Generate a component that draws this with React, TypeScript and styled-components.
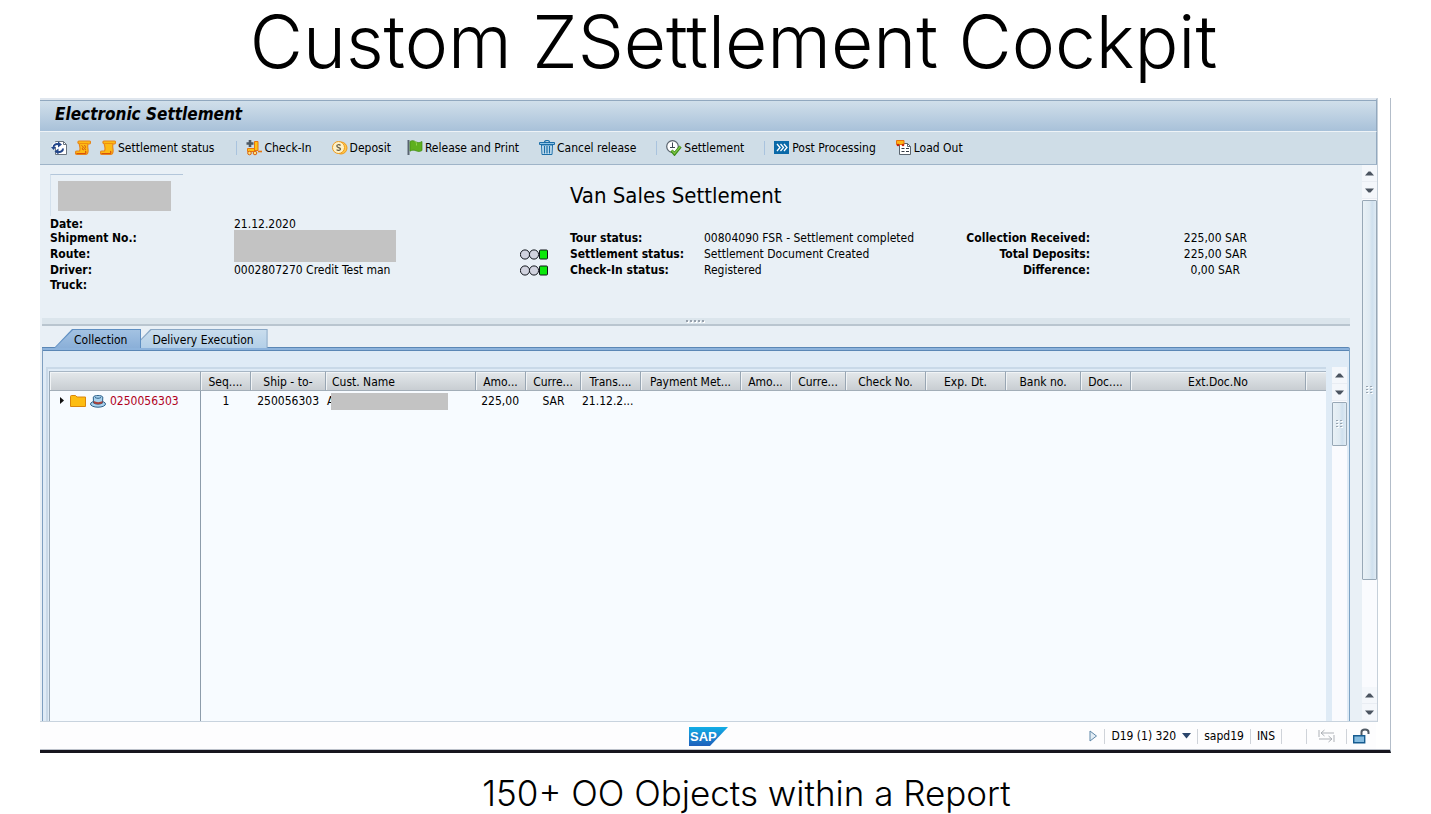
import React from "react";
import styled, { createGlobalStyle } from "styled-components";

const Global = createGlobalStyle`
  *, *::before, *::after { box-sizing: border-box; }
  body { margin: 0; background: #fff; color: #000; font: 12px/16px "DejaVu Sans Condensed", "DejaVu Sans", sans-serif; }
  button { font: inherit; color: inherit; border: 0; padding: 0; background: none; cursor: pointer; }
  h1, h2, p, dl, dd, dt { margin: 0; }
  svg { display: block; flex: none; }
`;

const Slide = styled.div`
  display: flex;
  flex-direction: column;
  min-height: 100vh;
  padding: 0 40px;
`;

const SlideTitle = styled.h1`
  padding: 0 0 14px 36px;
  font: 300 73px/84px Inter, sans-serif;
  text-align: center;
`;

const SlideCaption = styled.p`
  padding: 19px 0 0 62px;
  height: 61px;
  font: 300 35px/42px Inter, sans-serif;
  text-align: center;
`;

const Window = styled.section`
  flex: 1;
  display: flex;
  flex-direction: column;
  border-right: 1px solid #b3bdc9;
  border-bottom: 3px solid #17161e;
`;

const Frame = styled.div`
  flex: 1;
  display: flex;
  flex-direction: column;
  margin-right: 12px;
  border-right: 1px solid #c6d0da;
`;

const TitleBar = styled.header`
  height: 34px;
  padding-left: 15px;
  border-top: 2px solid #dfe6ee;
  border-bottom: 1px solid #eef3f7;
  border-right: 1px solid #93a9bf;
  box-shadow: inset 0 1px #91a8bf;
  background: linear-gradient(#d2e0eb, #a8c1d9);
  font: italic bold 17px/29px "DejaVu Sans Condensed", "DejaVu Sans", sans-serif;
`;

const Toolbar = styled.div`
  display: flex;
  align-items: center;
  height: 33px;
  padding-left: 11px;
  border-bottom: 1px solid #9fb4c8;
  border-right: 1px solid #93a9bf;
  background: #cfdde7;
`;

const ToolButton = styled.button<{ $gap?: number }>`
  display: flex;
  align-items: center;
  gap: 2px;
  height: 24px;
  margin-right: ${(p) => p.$gap ?? 20}px;
  white-space: nowrap;
`;

const ToolDivider = styled.span`
  width: 1px;
  height: 14px;
  margin-right: 9px;
  background: #a9c3de;
`;

const Body = styled.div`
  flex: 1;
  display: flex;
  min-height: 480px;
  border-bottom: 1px solid #c8d3de;
  background: #e9f0f6;
`;

const Main = styled.main`
  flex: 1;
  min-width: 0;
  display: flex;
  flex-direction: column;
  padding: 0 12px 0 2px;
`;

const Summary = styled.div`
  display: flex;
  height: 153px;
  padding: 9px 0 0 8px;
`;

const SummaryGroup = styled.div<{ $width: number }>`
  flex: none;
  width: ${(p) => p.$width}px;
`;

const LogoFrame = styled.div`
  width: 133px;
  height: 42px;
  padding: 6px 0 0 7px;
  border-top: 1px solid #b3c6da;
  border-left: 1px solid #d3e0ec;
`;

const Redacted = styled.span<{ $width: number; $height: number }>`
  position: relative;
  display: block;
  width: ${(p) => p.$width}px;
  height: ${(p) => p.$height}px;
  background: #c3c3c3;
`;

const Heading = styled.h2`
  height: 42px;
  padding: 8px 0 0 50px;
  font-size: 22px;
  font-weight: 400;
  line-height: 28px;
`;

const Blank = styled.div`
  height: 42px;
`;

const Facts = styled.dl<{ $columns: string; $right?: boolean }>`
  display: grid;
  grid-template-columns: ${(p) => p.$columns};
  grid-template-rows: 14px 16px 16px 15px 16px;
  line-height: 16px;
  white-space: nowrap;
  text-align: ${(p) => (p.$right ? "right" : "left")};
  dt { font-weight: 700; }
`;

const Term = styled.dt<{ $row: number; $column?: number }>`
  grid-row: ${(p) => p.$row};
  grid-column: ${(p) => p.$column ?? 1};
`;

const Value = styled.dd<{ $row: number; $column?: number; $span?: number; $inset?: number }>`
  grid-row: ${(p) => p.$row} / span ${(p) => p.$span ?? 1};
  grid-column: ${(p) => p.$column ?? 2};
  padding-right: ${(p) => p.$inset ?? 0}px;
`;

const Lamp = styled.dd<{ $row: number }>`
  grid-row: ${(p) => p.$row};
  grid-column: 1;
  padding-top: 3px;
`;

const Splitter = styled.div`
  display: flex;
  justify-content: center;
  align-items: center;
  gap: 2px;
  height: 8px;
  padding-right: 2px;
  border-bottom: 2px solid #b9c5cf;
  background: #dbe5ec;
`;

const SplitDot = styled.i`
  width: 2px;
  height: 2px;
  background: #97a1ac;
  box-shadow: 1px 1px #fff;
`;

const Tabs = styled.div`
  display: flex;
  padding: 3px 0 0 12px;
`;

const Tab = styled.button<{ $active?: boolean }>`
  position: relative;
  z-index: ${(p) => (p.$active ? 2 : 1)};
  height: 19px;
  margin-right: -9px;
  padding: 3px 14px 0 20px;
  line-height: 16px;
  isolation: isolate;
  &::before, &::after {
    content: "";
    position: absolute;
    inset: 0;
    z-index: -1;
    clip-path: polygon(18px 0, 100% 0, 100% 100%, 0 100%);
    background: ${(p) => (p.$active ? "#5f8fc2" : "#8aa8c6")};
  }
  &::after {
    inset: 1px 1px 0 1px;
    background: ${(p) => (p.$active ? "linear-gradient(#a3c2e2, #8aafd8)" : "linear-gradient(#c9dded, #b3cfe8)")};
  }
`;

const Panel = styled.div`
  flex: 1;
  display: flex;
  padding: 17px 2px 0 3px;
  border-top: 2px solid #8db3dc;
  border-left: 1px solid #7f9fc0;
  border-right: 1px solid #7da3c4;
  border-radius: 0 2px 0 0;
  box-shadow: inset 0 1px #5b87b5, 0 -1px #5b87b5;
  background: #dfebf6;
`;

const GridFrame = styled.div`
  flex: 1;
  min-width: 0;
  display: flex;
  margin-right: 6px;
  padding: 2px 0 0 1px;
  border-top: 2px solid #c9d9e8;
  border-left: 2px solid #c9d9e8;
`;

const GridArea = styled.div`
  flex: 1;
  min-width: 0;
  overflow: hidden;
  border-left: 1px solid #9aaab8;
  background: linear-gradient(#8d9cab, #8d9cab) 150px 0 / 1px 100% no-repeat #f7fbff;
`;

const Grid = styled.table`
  width: 100%;
  border-collapse: separate;
  border-spacing: 0;
  table-layout: fixed;
  white-space: nowrap;
`;

const HeadCell = styled.th<{ $left?: boolean }>`
  height: 20px;
  padding: 2px 6px 0;
  overflow: hidden;
  border-top: 1px solid #a7b6c4;
  border-bottom: 1px solid #a3aeb8;
  border-right: 1px solid #98a6b3;
  background: linear-gradient(#e4e8eb, #c8cdd2);
  box-shadow: inset 1px 1px #f1f4f6;
  font-weight: 400;
  line-height: 16px;
  text-align: ${(p) => (p.$left ? "left" : "center")};
  &:last-child { border-right: 0; }
`;

const Cell = styled.td<{ $align?: string }>`
  height: 19px;
  padding: 1px ${(p) => (p.$align === "right" ? 7 : 1)}px 0 1px;
  text-align: ${(p) => p.$align ?? "left"};
`;

const TreeNode = styled.div`
  display: flex;
  align-items: center;
  gap: 4px;
  padding-left: 6px;
  color: #b0001c;
`;

const NameMask = styled.div`
  display: flex;
  & > span:first-child { width: 4px; }
`;

const Scrollbar = styled.div`
  flex: none;
  display: flex;
  flex-direction: column;
  width: 15px;
  background: #fafbfe;
`;

const ScrollArrow = styled.button`
  display: grid;
  place-items: center;
  flex: none;
  width: 15px;
  height: 17px;
  border-bottom: 1px solid #e9edf3;
  background: #f4f7fb;
`;

const ScrollTrack = styled.div`
  flex: 1;
  padding-top: 1px;
`;

const ScrollThumb = styled.div<{ $size: string }>`
  display: grid;
  place-items: center;
  height: ${(p) => p.$size};
  border: 1px solid #98a8b6;
  border-radius: 1px;
  background: linear-gradient(90deg, #e9f1f6, #dfeaf2 50%, #cfe0ee 70%, #dfebf4);
`;

const StatusBar = styled.footer`
  display: grid;
  grid-template-columns: 1fr auto 1fr;
  align-items: center;
  height: 27px;
  margin-right: 14px;
  padding-top: 1px;
  background: #fdfdfe;
`;

const StatusItems = styled.div`
  display: flex;
  align-items: center;
  justify-content: flex-end;
  gap: 6px;
  padding-right: 6px;
`;

const StatusDivider = styled.span`
  width: 1px;
  height: 15px;
  background: #cfd3d9;
`;

const StatusGap = styled.span`
  width: 12px;
`;

const StatusMode = styled.span`
  padding: 0 5px;
`;

const StatusButton = styled.button`
  display: flex;
  align-items: center;
  gap: 6px;
`;

const BottomLine = styled.div`
  height: 1px;
  background: #bcc1ca;
`;

const RefreshIcon = () => (
  <svg width="16" height="16" viewBox="0 0 16 16" fill="none">
    <path d="M4.500 1.500h8l3 3v10h-11z" fill="#fff" stroke="#6a747f" />
    <path d="M12.500 1.500v3h3" stroke="#6a747f" />
    <path d="M2.500 7.500c0-2.800 2.500-4 5-3.200" stroke="#fff" strokeWidth="4" />
    <path d="M2.500 7.500c0-2.800 2.500-4 5-3.200" stroke="#23468a" strokeWidth="2" />
    <path d="M7 1.500l4 3-4 3z" fill="#23468a" />
    <path d="M12 8.500c0 2.800-2.500 4-5 3.200" stroke="#23468a" strokeWidth="2" />
    <path d="M7.500 8.500l-4 3 4 3z" fill="#23468a" />
    <path d="M0 7h5l-2.500 3z" fill="#23468a" />
  </svg>
);

const ScrollIcon = ({ marked }: { marked?: boolean }) => (
  <svg width="16" height="16" viewBox="0 0 16 16" strokeLinejoin="round">
    <path d="M4 1h10.500c1.500 0 1.500 3-.5 3H13c-1 3 .5 5 0 8-.3 2-1 2.500-2.500 2.500H2c-2 0-2-3.500 0-3.500h2.500C6 8 4 6 4.500 4 2.500 4 2.500 1 4 1z" fill="#fdbb14" stroke="#e8861a" strokeWidth="1.200" />
    <path d="M1.500 13.500h8.500c1 0 1-1.500.5-2.500" fill="none" stroke="#d8500c" strokeWidth="1.200" />
    <path d="M4.500 3.500H13" stroke="#ef8f10" />
    {marked && <path d="M6.500 5.500l2 1.500-1.500 2 2 1M9.500 5l1 2-1 2 1.500 1" fill="none" stroke="#d8600c" />}
  </svg>
);

const CheckInIcon = () => (
  <svg width="16" height="16" viewBox="0 0 16 16" fill="none">
    <path d="M8.500 1.500h3.500v9H8.500z" fill="#fdc216" stroke="#e8760c" />
    <path d="M12 11.500h4" stroke="#e8760c" strokeWidth="1.600" />
    <path d="M1.500 8.500h7v3h-7z" fill="#fdc216" stroke="#e8760c" />
    <circle cx="3.500" cy="13" r="1.800" fill="#ffe27a" stroke="#d8600c" />
    <circle cx="9" cy="13" r="1.800" fill="#ffe27a" stroke="#d8600c" />
    <path d="M4 0v7M.5 3.500h7" stroke="#4d5863" strokeWidth="2.600" />
  </svg>
);

const CoinIcon = () => (
  <svg width="16" height="16" viewBox="0 0 16 16" fill="none">
    <circle cx="9" cy="8" r="6" fill="#fdc74a" stroke="#ee9a1c" />
    <circle cx="6.500" cy="7.500" r="6" fill="#fff1c4" stroke="#ee9a1c" />
    <path d="M8.500 5.500c-1-1.200-3.700-1-3.700.6 0 1.900 3.700 1 3.700 3 0 1.600-2.800 1.800-3.900.5" stroke="#5f5a48" strokeWidth="1.200" />
  </svg>
);

const FlagIcon = () => (
  <svg width="16" height="16" viewBox="0 0 16 16">
    <path d="M.5 0h2v15h-2z" fill="#596470" />
    <path d="M3 1.500c3-2 5 0 7 .8 1.800.7 3.500 0 5-.8v9c-2 1.200-4 1.200-6 .3-2-.8-4-1-6 .4z" fill="#5fb01e" stroke="#3f8a12" strokeWidth=".7" />
    <path d="M8 1.500c1.500.5 1.500 1 1.500 4" fill="none" stroke="#93d44e" />
  </svg>
);

const TrashIcon = () => (
  <svg width="16" height="16" viewBox="0 0 16 16" fill="none" stroke="#1b6ea8">
    <path d="M5.500 2c0-2 5-2 5 0" strokeWidth="1.200" />
    <path d="M.5 2.500h15v2H.5z" fill="#8fc3e6" />
    <path d="M2.500 5l.5 9.500h10l.5-9.500z" fill="#cfe6f4" />
    <path d="M5.500 6v7.500M8 6v7.500M10.500 6v7.500" strokeWidth="1.300" />
  </svg>
);

const ClockCheckIcon = () => (
  <svg width="16" height="16" viewBox="0 0 16 16" fill="none">
    <circle cx="6.500" cy="6.500" r="5.800" fill="#fff" stroke="#5a646e" strokeWidth="1.200" />
    <path d="M6.500 2.500v5.500M4 7.500h5" stroke="#3f4851" />
    <path d="M5.500 10.500l3 3.500 6-7.500" stroke="#3c8c18" strokeWidth="3" />
    <path d="M5.800 10.500l2.700 3 5.800-7" stroke="#7cc443" strokeWidth="1.200" />
  </svg>
);

const ChevronsIcon = () => (
  <svg width="16" height="16" viewBox="0 0 16 16" fill="none">
    <path d="M0 1h15v13H0z" fill="#0a69a8" />
    <path d="M3 4l3 3.500L3 11M6.500 4l3 3.500-3 3.500M10 4l3 3.500-3 3.500" stroke="#fff" strokeWidth="1.300" />
  </svg>
);

const LoadOutIcon = () => (
  <svg width="16" height="16" viewBox="0 0 16 16" fill="none">
    <path d="M3.500 3.500h8l3 3V14.500h-11z" fill="#fff" stroke="#5a646e" />
    <path d="M11.500 3.500v3h3" stroke="#5a646e" />
    <path d="M5.500 8.500h3M10 8.500h3M5.500 11.500h3M10 11.500h3" stroke="#333b44" />
    <path d="M.5.5h7.500v4H.5z" fill="#fdb515" stroke="#e8700c" />
    <circle cx="2" cy="5" r="1.300" fill="#c9280c" />
    <circle cx="7" cy="5" r="1.300" fill="#c9280c" />
  </svg>
);

const LampIcon = () => (
  <svg width="28" height="11" viewBox="0 0 28 11" stroke="#10141a">
    <circle cx="5" cy="5.500" r="4.600" fill="#d0d2de" />
    <circle cx="14" cy="5.500" r="4.600" fill="#d0d2de" />
    <rect x="19.500" y="1" width="8" height="9" rx="1" fill="#0be80b" />
  </svg>
);

const ExpandIcon = () => (
  <svg width="9" height="8" viewBox="0 0 9 8">
    <path d="M3 0l4 3.500L3 7z" fill="#111" />
  </svg>
);

const FolderIcon = () => (
  <svg width="16" height="12" viewBox="0 0 16 12">
    <path d="M.5 1.500q0-1 1-1h4l1.500 1.500h8.500v9.500H.5z" fill="#fdbd12" stroke="#d9860c" />
  </svg>
);

const HatIcon = () => (
  <svg width="16" height="13" viewBox="0 0 16 13">
    <ellipse cx="8" cy="9" rx="7.500" ry="3.200" fill="#a9d2ee" stroke="#2c5f88" />
    <path d="M3.500 8l-.2-6c1-2 8.500-2 9.500 0l-.3 6c-2 1.500-7 1.500-9 0z" fill="#a9d2ee" stroke="#2c5f88" />
    <path d="M3.700 6c2.500 1.500 6.500 1.500 8.800 0v2.200c-2.500 1.400-6.500 1.400-8.800 0z" fill="#a5423c" />
    <path d="M5 2.500c2 1 4 1 6 0" fill="none" stroke="#2c5f88" />
  </svg>
);

const ArrowGlyph = ({ down }: { down?: boolean }) => (
  <svg width="9" height="5" viewBox="0 0 9 5">
    <path d={down ? "M0 .5h9L5.500 4.500h-2z" : "M0 4.500h9L5.500.5h-2z"} fill="#4b5460" />
  </svg>
);

const GripIcon = () => (
  <svg width="7" height="8" viewBox="0 0 7 8">
    <path d="M1 1h2v1H1zM5 1h2v1H5zM1 4h2v1H1zM5 4h2v1H5zM1 7h2v1H1zM5 7h2v1H5z" fill="#fff" />
    <path d="M0 0h2v1H0zM4 0h2v1H4zM0 3h2v1H0zM4 3h2v1H4zM0 6h2v1H0zM4 6h2v1H4z" fill="#98a4b0" />
  </svg>
);

const SapLogo = () => (
  <svg width="39" height="19" viewBox="0 0 39 19" role="img" aria-label="SAP">
    <defs>
      <linearGradient id="sap" x1="0" y1="0" x2="0" y2="1">
        <stop offset="0" stopColor="#12aee6" />
        <stop offset="1" stopColor="#1e5fbb" />
      </linearGradient>
    </defs>
    <path d="M0 0h39L21 19H0z" fill="url(#sap)" />
    <text x="1" y="14" fill="#fff" fontFamily="Liberation Sans, sans-serif" fontSize="13" fontWeight="700">SAP</text>
  </svg>
);

const PlayIcon = () => (
  <svg width="9" height="12" viewBox="0 0 9 12">
    <path d="M1 1v10l6.500-5z" fill="#e3edf5" stroke="#5f87a8" />
  </svg>
);

const CaretIcon = () => (
  <svg width="9" height="6" viewBox="0 0 9 6">
    <path d="M0 0h9L4.500 5.500z" fill="#2a456b" />
  </svg>
);

const InsertIcon = () => (
  <svg width="17" height="14" viewBox="0 0 17 14" fill="none" stroke="#adb1b7">
    <path d="M1 1v7M3 4h13M6.500 1L3 4l3.500 3M16 6v7M1 10h13M10.500 7l3.500 3-3.500 3" />
  </svg>
);

const LockIcon = () => (
  <svg width="17" height="16" viewBox="0 0 17 16" fill="none">
    <path d="M8.500 8V4c0-3.500 7-3.500 7 0v2" stroke="#505a64" strokeWidth="2" />
    <path d="M.7 7.700h11v7H.7z" fill="#86bce0" stroke="#175c90" strokeWidth="1.400" />
  </svg>
);

const columns: [string, number][] = [
  ["Seq....", 50], ["Ship - to-", 75], ["Cust. Name", 150], ["Amo...", 50], ["Curre...", 55],
  ["Trans....", 60], ["Payment Met...", 100], ["Amo...", 50], ["Curre...", 55], ["Check No.", 80],
  ["Exp. Dt.", 80], ["Bank no.", 75], ["Doc....", 50], ["Ext.Doc.No", 175],
];

function VerticalScroll({ size, ends }: { size: string; ends?: boolean }) {
  return (
    <Scrollbar>
      <ScrollArrow aria-label="Scroll up"><ArrowGlyph /></ScrollArrow>
      <ScrollArrow aria-label="Scroll down"><ArrowGlyph down /></ScrollArrow>
      <ScrollTrack><ScrollThumb $size={size}><GripIcon /></ScrollThumb></ScrollTrack>
      {ends && <ScrollArrow aria-label="Scroll up"><ArrowGlyph /></ScrollArrow>}
      {ends && <ScrollArrow aria-label="Scroll down"><ArrowGlyph down /></ScrollArrow>}
    </Scrollbar>
  );
}

export default function App() {
  return (
    <Slide>
      <Global />
      <SlideTitle>Custom ZSettlement Cockpit</SlideTitle>
      <Window>
        <Frame>
          <TitleBar>Electronic Settlement</TitleBar>
          <Toolbar>
            <ToolButton $gap={8} aria-label="Refresh"><RefreshIcon /></ToolButton>
            <ToolButton $gap={9} aria-label="Log"><ScrollIcon marked /></ToolButton>
            <ToolButton $gap={22}><ScrollIcon />Settlement status</ToolButton>
            <ToolDivider />
            <ToolButton><CheckInIcon />Check-In</ToolButton>
            <ToolButton $gap={16}><CoinIcon />Deposit</ToolButton>
            <ToolButton><FlagIcon />Release and Print</ToolButton>
            <ToolButton><TrashIcon />Cancel release</ToolButton>
            <ToolDivider />
            <ToolButton><ClockCheckIcon />Settlement</ToolButton>
            <ToolDivider />
            <ToolButton><ChevronsIcon />Post Processing</ToolButton>
            <ToolButton><LoadOutIcon />Load Out</ToolButton>
          </Toolbar>
          <Body>
            <Main>
              <Summary>
                <SummaryGroup $width={470}>
                  <LogoFrame><Redacted $width={113} $height={30} /></LogoFrame>
                  <Facts $columns="184px 1fr">
                    <Term $row={1}>Date:</Term><Value $row={1}>21.12.2020</Value>
                    <Term $row={2}>Shipment No.:</Term>
                    <Value $row={2} $span={2}><Redacted $width={162} $height={32} /></Value>
                    <Term $row={3}>Route:</Term>
                    <Term $row={4}>Driver:</Term><Value $row={4}>0002807270 Credit Test man</Value>
                    <Term $row={5}>Truck:</Term>
                  </Facts>
                </SummaryGroup>
                <SummaryGroup $width={390}>
                  <Heading>Van Sales Settlement</Heading>
                  <Facts $columns="50px 134px 1fr">
                    <Term $row={2} $column={2}>Tour status:</Term>
                    <Value $row={2} $column={3}>00804090 FSR - Settlement completed</Value>
                    <Lamp $row={3}><LampIcon /></Lamp>
                    <Term $row={3} $column={2}>Settlement status:</Term>
                    <Value $row={3} $column={3}>Settlement Document Created</Value>
                    <Lamp $row={4}><LampIcon /></Lamp>
                    <Term $row={4} $column={2}>Check-In status:</Term>
                    <Value $row={4} $column={3}>Registered</Value>
                  </Facts>
                </SummaryGroup>
                <SummaryGroup $width={337}>
                  <Blank />
                  <Facts $columns="180px 157px" $right>
                    <Term $row={2}>Collection Received:</Term><Value $row={2}>225,00 SAR</Value>
                    <Term $row={3}>Total Deposits:</Term><Value $row={3}>225,00 SAR</Value>
                    <Term $row={4}>Difference:</Term><Value $row={4} $inset={7}>0,00 SAR</Value>
                  </Facts>
                </SummaryGroup>
              </Summary>
              <Splitter><SplitDot /><SplitDot /><SplitDot /><SplitDot /><SplitDot /></Splitter>
              <Tabs role="tablist">
                <Tab role="tab" aria-selected="true" $active>Collection</Tab>
                <Tab role="tab" aria-selected="false">Delivery Execution</Tab>
              </Tabs>
              <Panel>
                <GridFrame>
                  <GridArea>
                    <Grid>
                      <colgroup>
                        <col width={151} />
                        {columns.map(([name, width], i) => <col key={name + i} width={width} />)}
                        <col />
                      </colgroup>
                      <thead>
                        <tr>
                          <HeadCell />
                          {columns.map(([name], i) => (
                            <HeadCell key={name + i} $left={name === "Cust. Name"}>{name}</HeadCell>
                          ))}
                          <HeadCell />
                        </tr>
                      </thead>
                      <tbody>
                        <tr>
                          <Cell><TreeNode><ExpandIcon /><FolderIcon /><HatIcon />0250056303</TreeNode></Cell>
                          <Cell $align="center">1</Cell>
                          <Cell $align="right">250056303</Cell>
                          <Cell><NameMask><span>A</span><Redacted $width={117} $height={17} /></NameMask></Cell>
                          <Cell $align="right">225,00</Cell>
                          <Cell $align="center">SAR</Cell>
                          <Cell>21.12.2...</Cell>
                          <Cell colSpan={9} />
                        </tr>
                      </tbody>
                    </Grid>
                  </GridArea>
                </GridFrame>
                <VerticalScroll size="44px" />
              </Panel>
            </Main>
            <VerticalScroll size="78%" ends />
          </Body>
        </Frame>
        <StatusBar>
          <span />
          <SapLogo />
          <StatusItems>
            <StatusButton aria-label="Show messages"><PlayIcon /></StatusButton>
            <StatusDivider />
            <StatusButton>D19 (1) 320<CaretIcon /></StatusButton>
            <StatusDivider />
            <span>sapd19</span>
            <StatusDivider />
            <span>INS</span>
            <StatusDivider />
            <StatusGap />
            <StatusDivider />
            <StatusMode><InsertIcon /></StatusMode>
            <StatusDivider />
            <LockIcon />
          </StatusItems>
        </StatusBar>
        <BottomLine />
      </Window>
      <SlideCaption>150+ OO Objects within a Report</SlideCaption>
    </Slide>
  );
}
